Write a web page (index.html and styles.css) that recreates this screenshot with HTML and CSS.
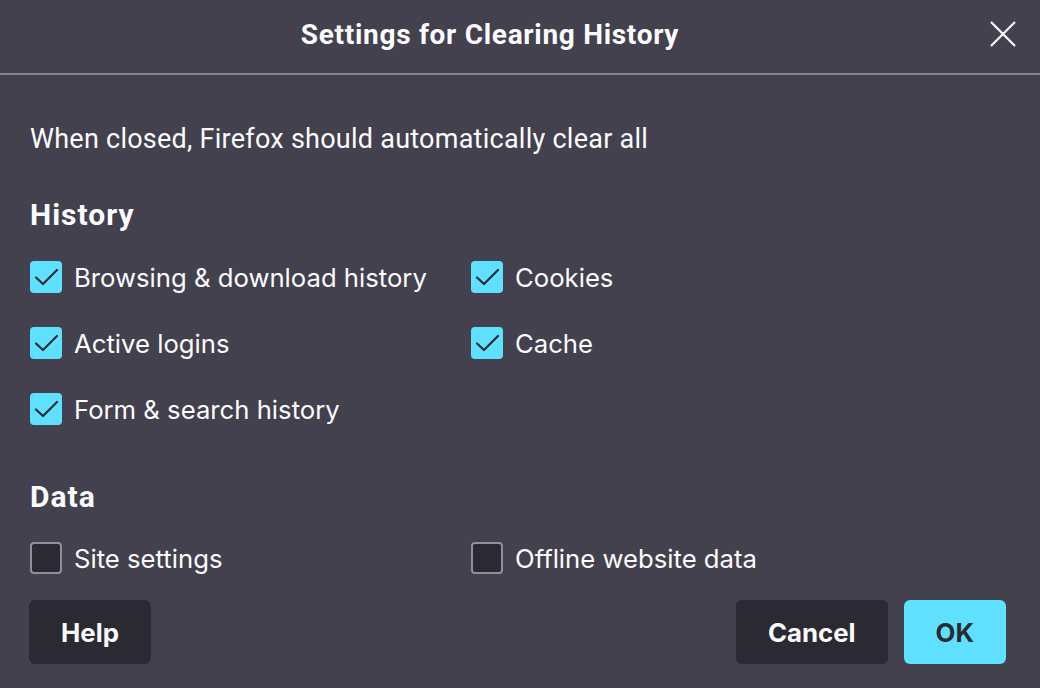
FILE: index.html
```html
<!DOCTYPE html>
<html>
<head>
<meta charset="utf-8">
<link rel="stylesheet" href="styles.css">
</head>
<body>
<div class="dialog">
  <header class="header">
    <h1 class="title">Settings for Clearing History</h1>
    <button class="close" aria-label="Close">
      <svg width="26" height="26" viewBox="0 0 26 26"><path d="M1 1 L25 25 M25 1 L1 25" stroke="#fbfbfe" stroke-width="2.2" fill="none"/></svg>
    </button>
  </header>
  <div class="divider"></div>
  <main class="body">
    <p class="intro">When closed, Firefox should automatically clear all</p>
    <h2 class="section">History</h2>
    <div class="grid">
      <label class="item"><span class="box checked"><svg width="32" height="32" viewBox="0 0 32 32"><path d="M6 16.5 L13 23 L27 9" stroke="#2b2a33" stroke-width="2.2" fill="none" stroke-linecap="round" stroke-linejoin="round"/></svg></span>Browsing &amp; download history</label>
      <label class="item"><span class="box checked"><svg width="32" height="32" viewBox="0 0 32 32"><path d="M6 16.5 L13 23 L27 9" stroke="#2b2a33" stroke-width="2.2" fill="none" stroke-linecap="round" stroke-linejoin="round"/></svg></span>Cookies</label>
      <label class="item"><span class="box checked"><svg width="32" height="32" viewBox="0 0 32 32"><path d="M6 16.5 L13 23 L27 9" stroke="#2b2a33" stroke-width="2.2" fill="none" stroke-linecap="round" stroke-linejoin="round"/></svg></span>Active logins</label>
      <label class="item"><span class="box checked"><svg width="32" height="32" viewBox="0 0 32 32"><path d="M6 16.5 L13 23 L27 9" stroke="#2b2a33" stroke-width="2.2" fill="none" stroke-linecap="round" stroke-linejoin="round"/></svg></span>Cache</label>
      <label class="item"><span class="box checked"><svg width="32" height="32" viewBox="0 0 32 32"><path d="M6 16.5 L13 23 L27 9" stroke="#2b2a33" stroke-width="2.2" fill="none" stroke-linecap="round" stroke-linejoin="round"/></svg></span>Form &amp; search history</label>
    </div>
    <h2 class="section data">Data</h2>
    <div class="grid">
      <label class="item"><span class="box"></span>Site settings</label>
      <label class="item"><span class="box"></span>Offline website data</label>
    </div>
  </main>
  <footer class="footer">
    <button class="btn">Help</button>
    <div class="spacer"></div>
    <button class="btn">Cancel</button>
    <button class="btn primary">OK</button>
  </footer>
</div>
</body>
</html>
```
FILE: styles.css
```css
html, body {
  margin: 0;
  padding: 0;
  background: #42414d;
}
.dialog {
  width: 1040px;
  height: 688px;
  background: #42414d;
  color: #fbfbfe;
  font-family: Inter, "Noto Sans", sans-serif;
  display: flex;
  flex-direction: column;
  overflow: hidden;
}
.header {
  height: 73px;
  box-sizing: border-box;
  padding-bottom: 4px;
  display: flex;
  align-items: center;
  justify-content: center;
  position: relative;
}
.title {
  margin: 0 0 0 -60px;
  font-family: Roboto, sans-serif;
  font-weight: 700;
  font-size: 28px;
  letter-spacing: 0.7px;
  line-height: 34px;
}
.close {
  position: absolute;
  right: 24px;
  top: 21px;
  width: 26px;
  height: 26px;
  padding: 0;
  border: 0;
  background: none;
  display: flex;
}
.divider {
  height: 2px;
  background: #85848c;
}
.body {
  padding: 0 30px;
}
.intro {
  margin: 48px 0 0;
  font-family: Roboto, sans-serif;
  font-size: 27px;
  letter-spacing: 0.25px;
  line-height: 32px;
}
.section {
  margin: 44px 0 0;
  font-family: Roboto, sans-serif;
  font-weight: 700;
  font-size: 30px;
  letter-spacing: 1px;
  line-height: 32px;
}
.section.data {
  margin-top: 56px;
}
.grid {
  display: grid;
  grid-template-columns: 441px 1fr;
  row-gap: 34px;
  margin-top: 30px;
}
.section.data + .grid {
  margin-top: 29px;
}
.item {
  display: flex;
  align-items: center;
  gap: 12px;
  font-size: 25.7px;
  height: 32px;
}
.box {
  width: 32px;
  height: 32px;
  box-sizing: border-box;
  border-radius: 4px;
  border: 2px solid #8f8f9d;
  background: #2b2a33;
  flex: none;
  display: flex;
}
.box.checked {
  border: 0;
  background: #5ee0fe;
}
.footer {
  display: flex;
  align-items: center;
  padding: 0 34px 0 29px;
  margin-top: 26px;
  gap: 16px;
}
.spacer {
  flex: 1;
}
.btn {
  height: 64px;
  border: 0;
  border-radius: 6px;
  background: #2b2a33;
  color: #fbfbfe;
  font-family: Inter, sans-serif;
  font-weight: 700;
  font-size: 25.8px;
  padding: 0 32px;
}
.btn.primary {
  background: #5ee0fe;
  color: #2b2a33;
}
```
